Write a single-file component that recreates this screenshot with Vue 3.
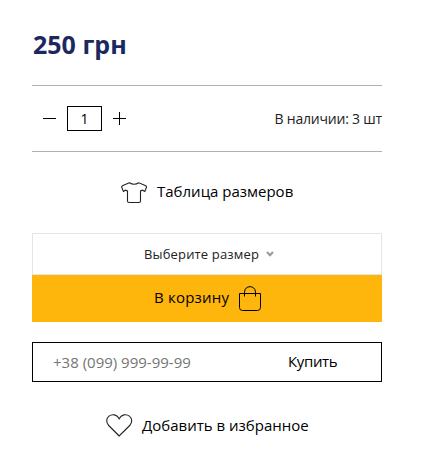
<script setup>
import {ref} from 'vue';

const price = ref(250);
const stock = ref(3);
const count = ref(1);
const phone = ref('');

const decrease = () => {
  if (count.value > 1) {
    count.value--;
  }
};

const increase = () => {
  if (count.value < stock.value) {
    count.value++;
  }
};
</script>

<template>
  <div class="product">
    <div class="price">{{ price }} грн</div>

    <div class="amount">
      <div class="counter">
        <button type="button" class="counter-btn" @click="decrease">
          <svg width="13" height="13" viewBox="0 0 13 13"><path d="M0 6.5h13"/></svg>
        </button>
        <input v-model="count" class="counter-input"/>
        <button type="button" class="counter-btn" @click="increase">
          <svg width="13" height="13" viewBox="0 0 13 13"><path d="M0 6.5h13M6.5 0v13"/></svg>
        </button>
      </div>
      <div class="stock">В наличии: {{ stock }} шт</div>
    </div>

    <a class="link sizes">
      <svg width="27" height="22" viewBox="0 0 27 22">
        <path d="M8.4 .8L1.9 3.4Q.9 3.9 .6 5L2.4 9.5L4.4 8.2L6.5 9V19Q6.5 20.5 8 20.5H18Q19.5 20.5 19.5 19V9L21.6 8.2L23.8 9.5L25.6 5Q25.3 3.9 24.3 3.4L17.8 .8Q13.1 3.8 8.4 .8Z"/>
      </svg>
      <span class="sizes-text">Таблица размеров</span>
    </a>

    <div class="select">
      <span class="select-text">Выберите размер</span>
      <svg width="8" height="6" viewBox="0 0 8 6"><path d="M1 1l3 3.2L7 1"/></svg>
    </div>
    <button type="button" class="cart">
      <span class="cart-text">В корзину</span>
      <svg width="23" height="25" viewBox="0 0 23 25">
        <path d="M.5 7.5H21.5V21.5Q21.5 24.5 18.5 24.5H3.5Q.5 24.5 .5 21.5ZM5.5 10.5V6.2C5.5 -1.2 16.5 -1.2 16.5 6.2V10.5"/>
      </svg>
    </button>

    <form class="quick" @submit.prevent>
      <input v-model="phone" class="phone" placeholder="+38 (099) 999-99-99"/>
      <button type="submit" class="buy">Купить</button>
    </form>

    <a class="link favorite">
      <svg width="27" height="23" viewBox="0 0 27 23">
        <path d="M13.2 22L2.7 11.5C-.1 8.6 .1 4.4 3 2.1C6.2 -.4 11.2 .5 13.2 4.8C15.2 .5 20.2 -.4 23.4 2.1C26.3 4.4 26.5 8.6 23.7 11.5Z"/>
      </svg>
      <span class="favorite-text">Добавить в избранное</span>
    </a>
  </div>
</template>

<style>
body {
  background: #fff;
}
</style>

<style scoped>
.product {
  box-sizing: border-box;
  width: 382px;
  padding: 28px 0 0 32px;
  font-family: "Open Sans", "Noto Sans", sans-serif;
  font-size: 15px;
  color: #000;
}

button,
input {
  box-sizing: border-box;
  margin: 0;
  padding: 0;
  border: 0;
  border-radius: 0;
  background: none;
  font: inherit;
  color: inherit;
  outline: none;
}

svg {
  display: block;
  flex: none;
  fill: none;
  stroke: #000;
}

.price {
  height: 57px;
  padding-left: 1px;
  box-sizing: border-box;
  line-height: 32px;
  font-size: 25px;
  font-weight: 700;
  color: #1c2961;
}

.amount {
  box-sizing: border-box;
  display: flex;
  justify-content: space-between;
  align-items: center;
  height: 67px;
  padding-left: 11px;
  border-top: 1px solid #b1b1b1;
  border-bottom: 1px solid #b1b1b1;
}

.counter {
  display: flex;
  align-items: center;
  gap: 11px;
}

.counter-input {
  width: 35px;
  height: 25px;
  border: 1px solid #000;
  text-align: center;
  font-size: 14px;
}

.stock {
  font-size: 14px;
  letter-spacing: -0.2px;
  white-space: nowrap;
  color: #222;
}

.link {
  display: flex;
  align-items: center;
  white-space: nowrap;
}

.link svg {
  stroke: #222;
  stroke-width: 1.1;
}

.sizes {
  height: 81px;
  padding-left: 89px;
  gap: 9px;
}

.sizes-text {
  padding-bottom: 3px;
}

.select {
  box-sizing: border-box;
  display: flex;
  align-items: center;
  height: 42px;
  padding-left: 111px;
  gap: 7px;
  border: 1px solid #e5e5e5;
  font-size: 13px;
  letter-spacing: 0.16px;
  color: #222;
}

.select-text {
  padding-bottom: 1px;
}

.select svg {
  stroke: #999;
  stroke-width: 2;
}

.cart {
  display: flex;
  align-items: center;
  width: 100%;
  height: 47px;
  padding-left: 122px;
  gap: 10px;
  background: #ffb60c;
  letter-spacing: 0.2px;
}

.cart-text {
  padding-bottom: 3px;
}

.quick {
  box-sizing: border-box;
  display: flex;
  height: 40px;
  margin-top: 20px;
  border: 1px solid #000;
}

.phone {
  width: 210px;
  padding-left: 20px;
  font-size: 15px;
}

.phone::placeholder {
  color: #757575;
  opacity: 1;
}

.buy {
  flex: 1;
  padding: 0 0 2px 45px;
  text-align: left;
  letter-spacing: -0.35px;
}

.favorite {
  height: 86px;
  padding-left: 74px;
  gap: 9px;
}
</style>
